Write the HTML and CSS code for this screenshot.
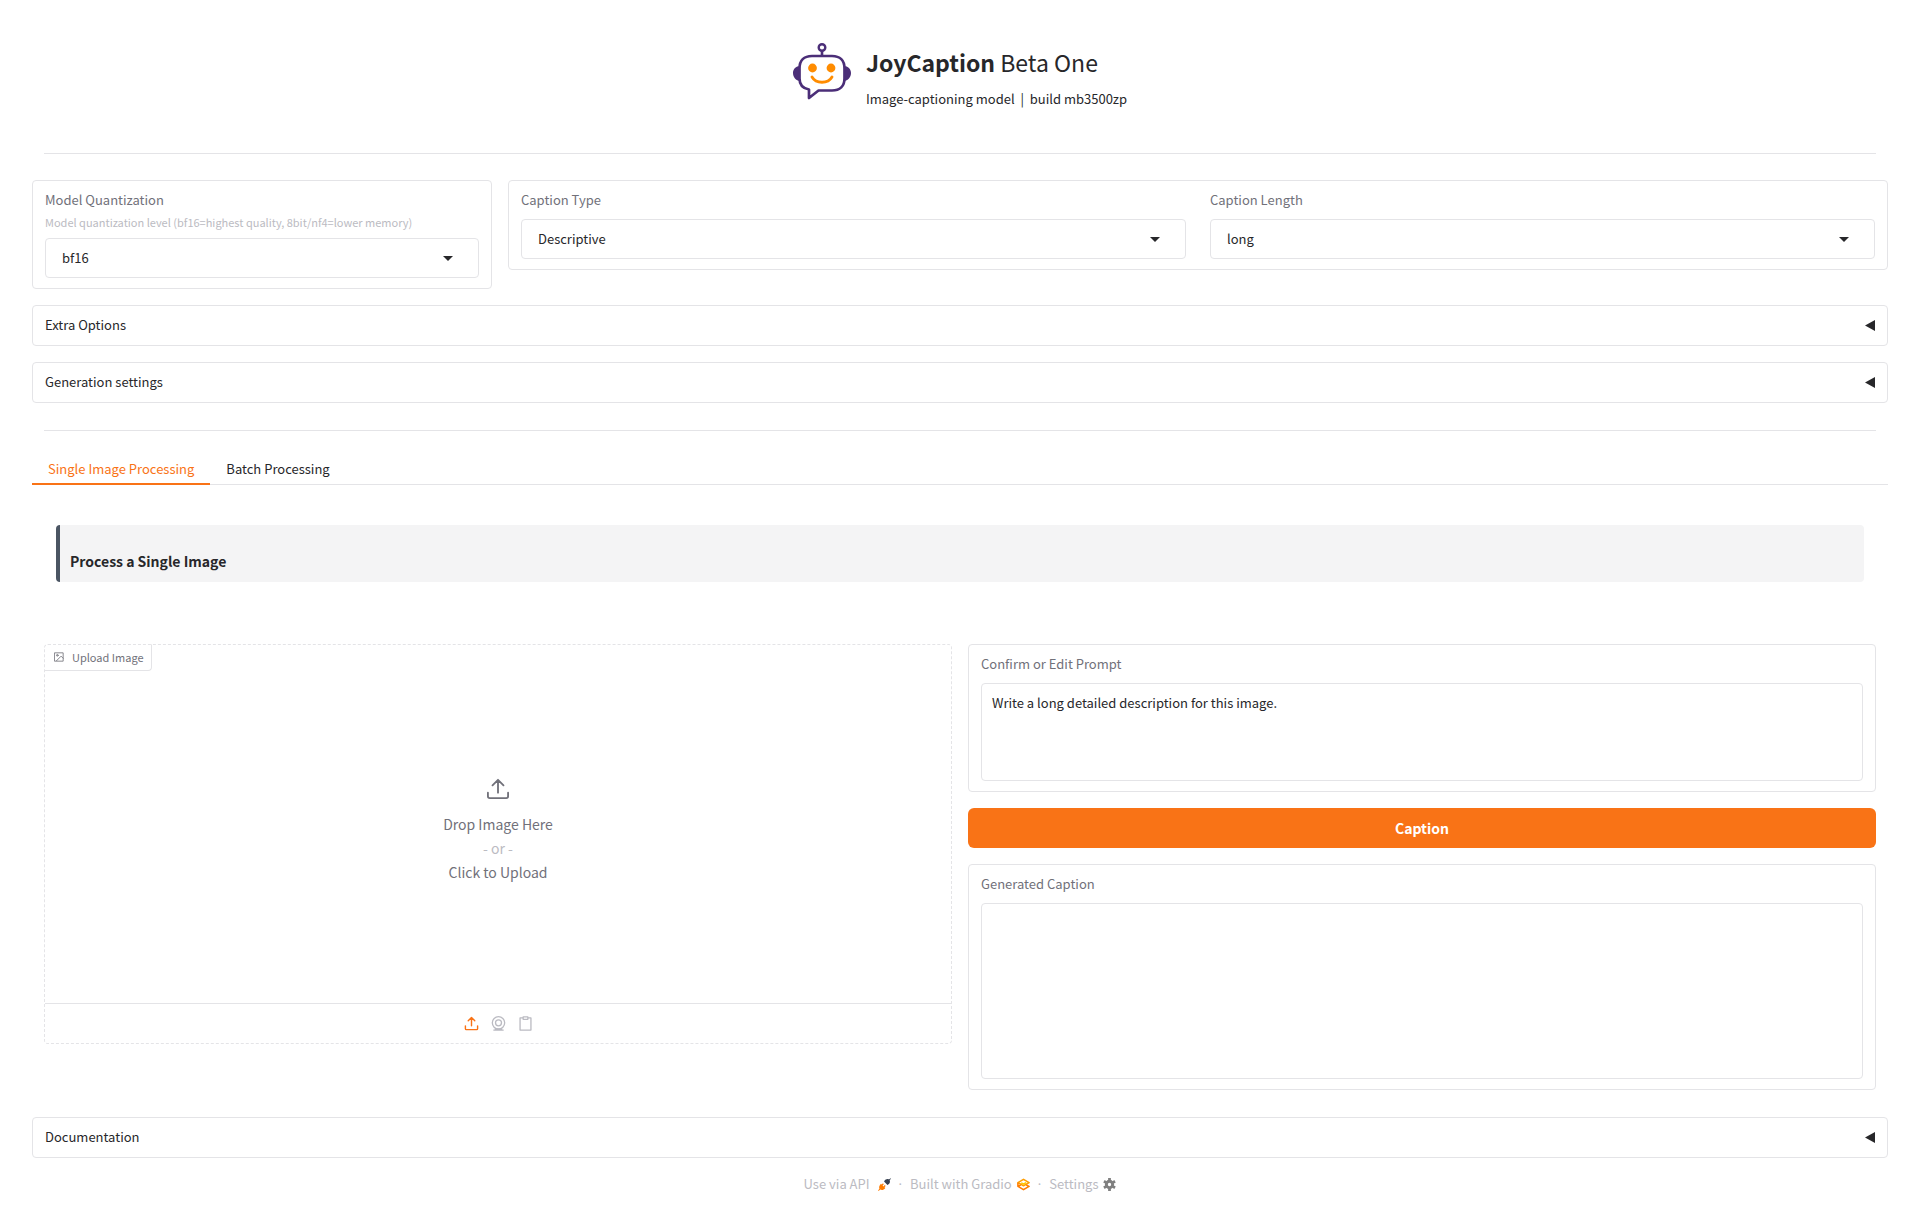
FILE: index.html
```html
<!DOCTYPE html>
<html lang="en">
<head>
<meta charset="utf-8">
<meta name="viewport" content="width=device-width, initial-scale=1">
<title>JoyCaption Beta One</title>
<link rel="stylesheet" href="styles.css">
</head>
<body>
<main class="app">
  <header class="brand">
    <svg class="brand-logo" viewBox="0 0 58 58" aria-hidden="true">
      <path d="M7 23c-4 0-7 3-7 7s3 8 7 8zM51 23c4 0 7 3 7 7s-3 8-7 8z" fill="#4b2e78"/>
      <circle cx="29" cy="4.500" r="3.300" fill="none" stroke="#4b2e78" stroke-width="2.400"/>
      <path d="M29 8v5" stroke="#4b2e78" stroke-width="2.600"/>
      <path d="M19 13h20c8 0 12.500 4.500 12.500 12.500v10C51.500 43 47 47.500 39 47.500H25.500L16 55v-8.500C10 45.500 6.500 42 6.500 35.500v-10C6.500 17.500 11 13 19 13z" fill="#fff" stroke="#4b2e78" stroke-width="2.700" stroke-linejoin="round"/>
      <circle cx="19.500" cy="25" r="4.400" fill="#ff8c00"/>
      <circle cx="38" cy="25" r="4.400" fill="#ff8c00"/>
      <path d="M19 34c4 7 16 7 20 0" fill="none" stroke="#ff8c00" stroke-width="2.800" stroke-linecap="round"/>
    </svg>
    <div>
      <h1 class="brand-title"><strong>JoyCaption</strong> Beta One</h1>
      <p class="brand-sub">Image-captioning model&nbsp; |&nbsp; build mb3500zp</p>
    </div>
  </header>
  <hr class="rule">

  <section class="options">
    <div class="card">
      <label class="label" for="quant">Model Quantization</label>
      <p class="info" id="quant-info">Model quantization level (bf16=highest quality, 8bit/nf4=lower memory)</p>
      <div class="select-wrap">
        <select class="field select" id="quant" aria-describedby="quant-info"><option>bf16</option></select>
        <svg class="caret" viewBox="0 0 10 5" aria-hidden="true"><path d="M0 0h10L5 5z"/></svg>
      </div>
    </div>
    <div class="card option-caption">
      <div class="option-field">
        <label class="label" for="type">Caption Type</label>
        <div class="select-wrap">
          <select class="field select" id="type"><option>Descriptive</option></select>
          <svg class="caret" viewBox="0 0 10 5" aria-hidden="true"><path d="M0 0h10L5 5z"/></svg>
        </div>
      </div>
      <div class="option-field">
        <label class="label" for="length">Caption Length</label>
        <div class="select-wrap">
          <select class="field select" id="length"><option>long</option></select>
          <svg class="caret" viewBox="0 0 10 5" aria-hidden="true"><path d="M0 0h10L5 5z"/></svg>
        </div>
      </div>
    </div>
  </section>

  <button class="card accordion" type="button" aria-expanded="false"><span>Extra Options</span><svg class="marker" viewBox="0 0 10 11" aria-hidden="true"><path d="M10 0v11L0 5.500z"/></svg></button>
  <button class="card accordion" type="button" aria-expanded="false"><span>Generation settings</span><svg class="marker" viewBox="0 0 10 11" aria-hidden="true"><path d="M10 0v11L0 5.500z"/></svg></button>
  <hr class="rule rule-mid">

  <div class="tabs" role="tablist">
    <button class="tab tab-active" type="button" role="tab" aria-selected="true">Single Image Processing</button>
    <button class="tab" type="button" role="tab" aria-selected="false">Batch Processing</button>
  </div>

  <section class="panel">
    <h2 class="banner">Process a Single Image</h2>
    <div class="columns">
      <div class="upload">
        <div class="upload-label">
          <svg class="upload-label-icon" viewBox="0 0 24 24" fill="none" stroke="currentColor" stroke-width="2" stroke-linecap="round" stroke-linejoin="round" aria-hidden="true"><rect x="2" y="2" width="20" height="20"/><circle cx="8" cy="8" r="2"/><path d="M22 15l-5-5L6 21"/></svg>
          <span>Upload Image</span>
        </div>
        <button class="drop" type="button">
          <svg class="drop-icon" viewBox="0 0 24 24" fill="none" stroke="currentColor" stroke-width="2" stroke-linecap="round" stroke-linejoin="round" aria-hidden="true"><path d="M1 16v4c0 1.500 1 2 2 2h18c1 0 2-.500 2-2v-4M12 16V2M6 8l6-6 6 6"/></svg>
          <span>Drop Image Here</span>
          <span class="drop-or">- or -</span>
          <span>Click to Upload</span>
        </button>
        <div class="sources">
          <button class="source source-active" type="button" aria-label="Upload file">
            <svg viewBox="0 0 16 16" fill="none" stroke="currentColor" stroke-width="1.500" stroke-linecap="round" stroke-linejoin="round"><path d="M1.500 10.500v3q0 1 1 1h11q1 0 1-1v-3M8 10.500V2M4.500 5L8 1.500 11.500 5"/></svg>
          </button>
          <button class="source" type="button" aria-label="Capture from camera">
            <svg viewBox="0 0 16 16" fill="none" stroke="currentColor" stroke-width="1.400" stroke-linejoin="round"><circle cx="8" cy="7.300" r="6.600"/><circle cx="8" cy="7.300" r="3.200"/><path d="M2.500 15h11M4 13.700h8"/></svg>
          </button>
          <button class="source" type="button" aria-label="Paste from clipboard">
            <svg viewBox="0 0 16 16" fill="none" stroke="currentColor" stroke-width="1.400" stroke-linejoin="round"><path d="M5.500 2H2.200v13h11.600V2h-3.300M5.500 1h5v2.500h-5z"/></svg>
          </button>
        </div>
      </div>

      <div class="output">
        <div class="card">
          <label class="label" for="prompt">Confirm or Edit Prompt</label>
          <textarea class="field text-area" id="prompt">Write a long detailed description for this image.</textarea>
        </div>
        <button class="primary" type="button">Caption</button>
        <div class="card">
          <label class="label" for="result">Generated Caption</label>
          <textarea class="field text-area text-area-tall" id="result" readonly></textarea>
        </div>
      </div>
    </div>
  </section>

  <button class="card accordion" type="button" aria-expanded="false"><span>Documentation</span><svg class="marker" viewBox="0 0 10 11" aria-hidden="true"><path d="M10 0v11L0 5.500z"/></svg></button>

  <footer class="footer">
    <a class="footer-link" href="#api">Use via API
      <svg class="footer-icon" viewBox="0 0 14 14" aria-hidden="true"><path d="M6.500 3.800C8 1.200 10 .800 11.800 1.500L13.400.200l.500.500-1.300 1.600c.700 2 .200 3.800-2.400 5.200z" fill="#374151"/><path d="M3.200 6.200l4.700 4.500C6 13.200 4 13.200 2.400 12.500L.700 14l-.600-.600L1.500 11.500C.800 9.500 1.500 8 3.200 6.200z" fill="#ff7c00"/><path d="M4.500 7.500l1.300-1.300M6.500 9.400l1.300-1.300" stroke="#ff7c00" stroke-width="1.300"/></svg>
    </a>
    <span class="dot">·</span>
    <a class="footer-link footer-link-tight" href="#gradio">Built with Gradio
      <svg class="footer-icon" viewBox="0 0 14 14" fill="none" stroke="#ff9d00" stroke-width="1.700" stroke-linejoin="round" aria-hidden="true"><path d="M1 5l6-3.500L13 5 7 8.300z"/><path d="M1 5v4l6 3.500L13 9l-3-1.500M1 9l3-1.500" stroke="#ff7c00"/><path d="M4.500 5.200L7 6.500l3-1.500" stroke="#ffc800"/></svg>
    </a>
    <span class="dot">·</span>
    <button class="footer-link footer-link-tight" type="button">Settings
      <svg class="footer-icon" viewBox="0 0 14 14" fill="none" stroke="#808080" aria-hidden="true"><circle cx="7" cy="7" r="3.400" stroke-width="3.200"/><path d="M7 0v3M7 11v3M1 3.500L3.500 5M10.500 9l2.500 1.500M1 10.500L3.500 9M10.500 5L13 3.500" stroke-width="3"/></svg>
    </button>
  </footer>
</main>
</body>
</html>
```
FILE: styles.css
```css
*, *::before, *::after { box-sizing: border-box; }

:root {
  --line: #e4e4e7;
  --text: #27272a;
  --muted: #71717a;
  --faint: #bbbbc2;
  --accent: #f97316;
}

body {
  margin: 0;
  background: #fff;
  color: var(--text);
  font: 13px/20px "Noto Sans CJK SC", "Noto Sans", sans-serif;
}

h1, h2, p { margin: 0; }
button, select, textarea { font: inherit; color: inherit; }
button { border: 0; padding: 0; background: none; cursor: pointer; }
svg { display: block; flex: none; }

.app {
  display: flex;
  flex-direction: column;
  gap: 16px;
  padding: 40px 32px 16px;
}

.brand {
  display: flex;
  justify-content: center;
  gap: 15px;
  height: 86px;
  padding-top: 3px;
}
.brand-logo { width: 58px; height: 58px; }
.brand-title { font-size: 23px; font-weight: 400; line-height: 38px; }
.brand-title strong { font-weight: 700; }
.brand-sub { margin-top: 8px; }

.rule {
  width: calc(100% - 24px);
  height: 1px;
  margin: 11px 12px 10px;
  border: 0;
  background: var(--line);
}
.rule-mid { margin: 11px 12px 7px; }

.card {
  border: 1px solid var(--line);
  border-radius: 4px;
  padding: 9px 12px 10px;
  background: #fff;
}

.options {
  display: grid;
  grid-template-columns: minmax(0, 1fr) minmax(0, 3fr);
  align-items: start;
  gap: 16px;
}
.option-caption { display: flex; gap: 24px; }
.option-field { flex: 1; min-width: 0; }

.label { display: block; margin-bottom: 9px; color: var(--muted); }
.info { margin: -6px 0 7px; font-size: 11px; line-height: 18px; color: var(--faint); }

.field {
  display: block;
  width: 100%;
  border: 1px solid var(--line);
  border-radius: 4px;
  background: #fff;
}
.select { height: 40px; padding: 0 40px 0 16px; appearance: none; }
.select-wrap { display: grid; align-items: center; }
.select-wrap > * { grid-area: 1 / 1; }
.caret {
  width: 10px;
  height: 5px;
  margin-right: 26px;
  justify-self: end;
  fill: var(--text);
  pointer-events: none;
}

.accordion {
  display: flex;
  align-items: center;
  justify-content: space-between;
  width: 100%;
  text-align: left;
}
.marker { width: 10px; height: 11px; fill: var(--text); }

.tabs { display: flex; border-bottom: 1px solid var(--line); }
.tab { height: 31px; margin-bottom: -1px; padding: 0 16px; border-bottom: 2px solid transparent; }
.tab-active { color: var(--accent); border-color: var(--accent); }

.panel { padding: 24px 12px 11px; }
.banner {
  margin: 0 12px 62px;
  padding: 24px 10px 9px;
  border-left: 4px solid #4b5563;
  border-radius: 4px;
  background: #f4f4f5;
  font-size: 14px;
  font-weight: 700;
  line-height: 24px;
}

.columns { display: grid; grid-template-columns: 1fr 1fr; align-items: start; gap: 16px; }

.upload {
  position: relative;
  display: flex;
  flex-direction: column;
  min-height: 400px;
  border: 1px dashed var(--line);
  border-radius: 4px;
  color: var(--muted);
}
.upload-label {
  position: absolute;
  top: -1px;
  left: -1px;
  display: flex;
  align-items: center;
  gap: 8px;
  height: 27px;
  padding: 0 7px 2px 9px;
  border: 1px solid var(--line);
  border-top-color: transparent;
  border-left-color: transparent;
  border-radius: 0 0 4px;
  font-size: 11px;
}
.upload-label-icon { width: 10px; height: 10px; }
.drop {
  flex: 1;
  display: flex;
  flex-direction: column;
  align-items: center;
  justify-content: center;
  padding-top: 14px;
  font-size: 14px;
  line-height: 24px;
}
.drop-icon { width: 22px; height: 22px; margin-bottom: 12px; }
.drop-or { color: var(--faint); }
.sources {
  display: flex;
  align-items: center;
  justify-content: center;
  gap: 12px;
  height: 40px;
  border-top: 1px solid var(--line);
  color: var(--faint);
}
.source svg { width: 15px; height: 15px; }
.source-active { color: var(--accent); }

.output { display: flex; flex-direction: column; gap: 16px; min-width: 0; }
.text-area { height: 98px; padding: 9px 10px; resize: none; }
.text-area-tall { height: 176px; }
.primary {
  height: 40px;
  border-radius: 6px;
  background: var(--accent);
  color: #fff;
  font-size: 14px;
  font-weight: 700;
}

.footer {
  display: flex;
  align-items: center;
  justify-content: center;
  gap: 8px;
  color: var(--faint);
}
.footer-link { display: flex; align-items: center; gap: 8px; color: inherit; text-decoration: none; }
.footer-link-tight { gap: 5px; }
.footer-icon { width: 13px; height: 13px; }
.dot { font-family: "Noto Sans", sans-serif; }
```
